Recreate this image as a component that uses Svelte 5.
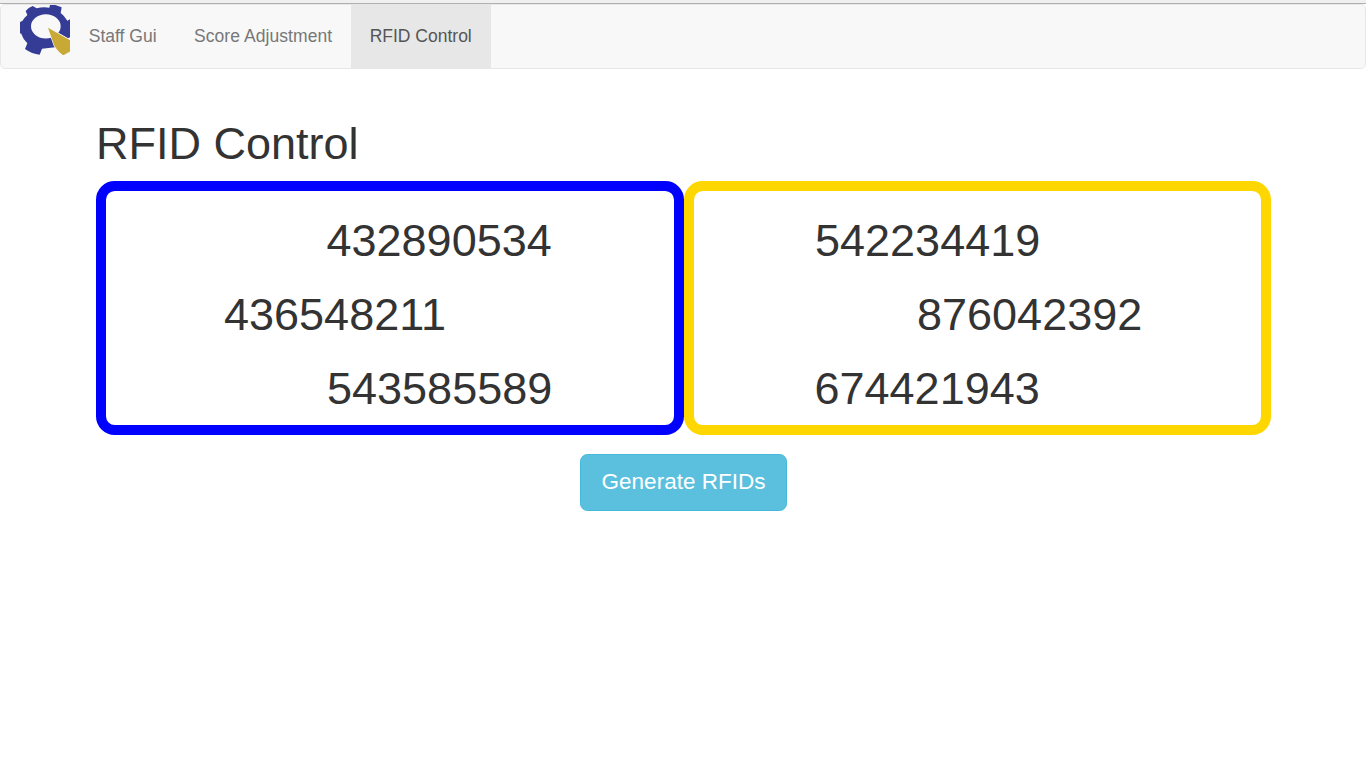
<script>
  const links = [
    { label: 'Staff Gui', active: false },
    { label: 'Score Adjustment', active: false },
    { label: 'RFID Control', active: true }
  ];
  const alliances = [
    {
      color: 'blue',
      tags: [
        { id: '432890534', indent: 220.5 },
        { id: '436548211', indent: 118 },
        { id: '543585589', indent: 221 }
      ]
    },
    {
      color: 'gold',
      tags: [
        { id: '542234419', indent: 121 },
        { id: '876042392', indent: 223 },
        { id: '674421943', indent: 120.5 }
      ]
    }
  ];
</script>

<div class="top-edge"></div>
<nav>
  <svg class="logo" viewBox="0 0 150 150" aria-label="Home">
    <path
      fill="#353c96"
      fill-rule="evenodd"
      d="M17 18 Q25 7 38 3 L50 10 Q68 5 88 8 L90 0 H106 L125 7 L122 24 Q134 33 142 47 L150 43 V97 L144 100 L117 85 L99 98 L105 127 L66 131 L59 149 Q36 147 15 132 L22 115 Q9 103 3 85 L0 86 V51 L7 48 Q13 38 22 30 Z M33 64 A44.5 36.500 0 1 0 122 64 A44.500 36.500 0 1 0 33 64 Z"
    />
    <path
      fill="#c9a936"
      stroke="#f8f8f8"
      stroke-width="4"
      paint-order="stroke"
      d="M84 68 L152 107 V138 L130 151 Q117 143 103 122 Z"
    />
  </svg>
  <ul>
    {#each links as link}
      <li class:active={link.active}>{link.label}</li>
    {/each}
  </ul>
</nav>

<main>
  <h1>RFID Control</h1>
  <div class="alliances">
    {#each alliances as alliance}
      <section class={alliance.color}>
        {#each alliance.tags as tag}
          <div class="tag" style="padding-left: {tag.indent}px">{tag.id}</div>
        {/each}
      </section>
    {/each}
  </div>
  <button>Generate RFIDs</button>
</main>

<style>
  :global(body) {
    margin: 0;
    background: #fff;
    color: #333;
    font-family: 'Liberation Sans', Arial, sans-serif;
    font-size: 17.5px;
  }
  .top-edge {
    height: 3px;
    background: #f0f0f0;
    border-bottom: 1px solid #b0b0b0;
  }
  nav {
    box-sizing: border-box;
    height: 65px;
    display: flex;
    padding-left: 19px;
    background: #f8f8f8;
    border: 1px solid #e7e7e7;
    border-radius: 5px;
  }
  .logo {
    width: 50px;
    height: 50px;
    flex: none;
  }
  ul {
    display: flex;
    margin: 0;
    padding: 0;
    list-style: none;
  }
  li {
    padding: 0 18.75px;
    line-height: 62px;
    color: #777;
  }
  li:nth-child(2) {
    letter-spacing: 0.06px;
  }
  li.active {
    background: #e7e7e7;
    color: #555;
  }
  main {
    display: flex;
    flex-direction: column;
    width: 1175px;
    margin: 38px 0 0 96px;
  }
  h1 {
    margin: 0;
    font-size: 45px;
    font-weight: 400;
    line-height: 74px;
  }
  .alliances {
    display: grid;
    grid-template-columns: 588px 587px;
  }
  section {
    box-sizing: border-box;
    height: 254px;
    padding-top: 13px;
    border: 10px solid;
    border-radius: 18.75px;
  }
  .blue {
    border-color: #00f;
  }
  .gold {
    border-color: gold;
  }
  .tag {
    font-size: 45px;
    line-height: 74px;
  }
  button {
    align-self: center;
    box-sizing: border-box;
    width: 207px;
    height: 57px;
    margin-top: 19px;
    padding: 0 0 1px;
    border: 1px solid #46b8da;
    border-radius: 7.5px;
    background: #5bc0de;
    color: #fff;
    font: 22.5px 'Liberation Sans', Arial, sans-serif;
  }
</style>
